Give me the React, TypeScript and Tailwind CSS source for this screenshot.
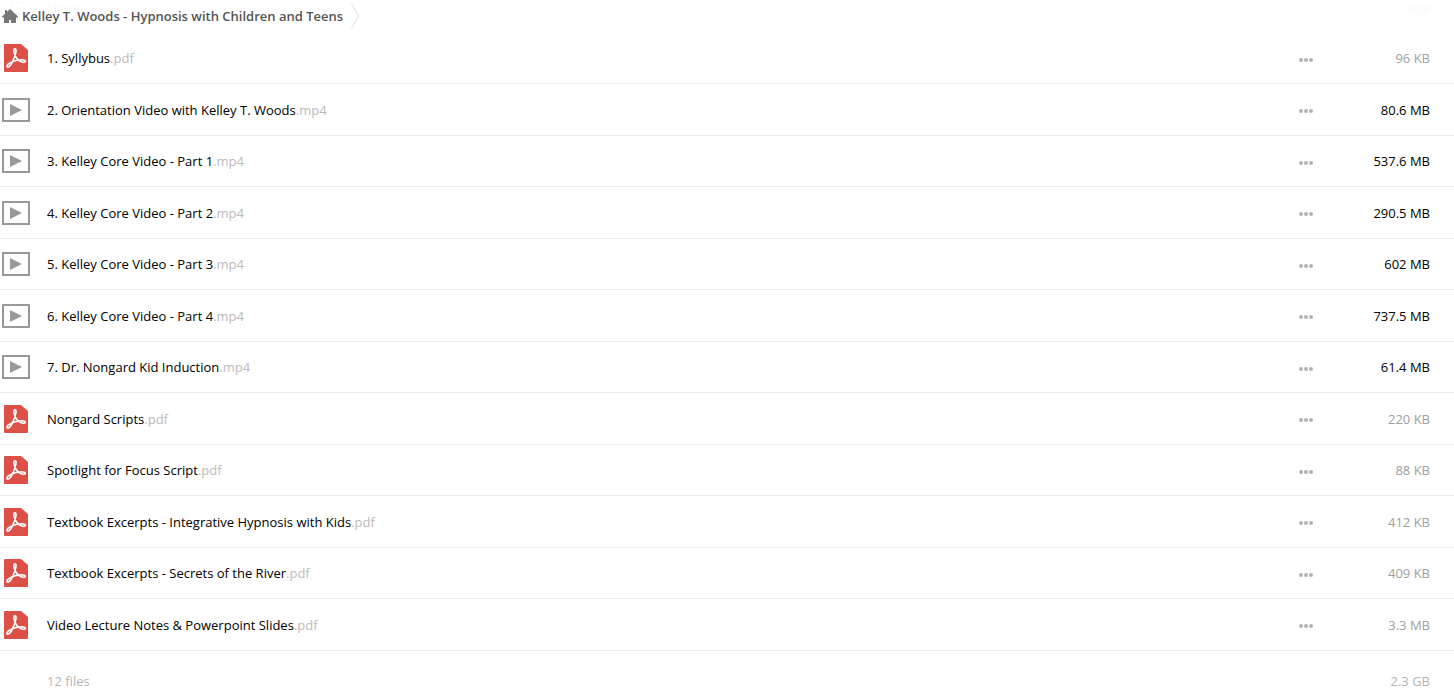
import React from 'react';

type FileKind = 'pdf' | 'mp4';

interface FileItem {
  name: string;
  kind: FileKind;
  size: string;
  large?: boolean;
}

const files: FileItem[] = [
  { name: '1. Syllybus', kind: 'pdf', size: '96 KB' },
  { name: '2. Orientation Video with Kelley T. Woods', kind: 'mp4', size: '80.6 MB', large: true },
  { name: '3. Kelley Core Video - Part 1', kind: 'mp4', size: '537.6 MB', large: true },
  { name: '4. Kelley Core Video - Part 2', kind: 'mp4', size: '290.5 MB', large: true },
  { name: '5. Kelley Core Video - Part 3', kind: 'mp4', size: '602 MB', large: true },
  { name: '6. Kelley Core Video - Part 4', kind: 'mp4', size: '737.5 MB', large: true },
  { name: '7. Dr. Nongard Kid Induction', kind: 'mp4', size: '61.4 MB', large: true },
  { name: 'Nongard Scripts', kind: 'pdf', size: '220 KB' },
  { name: 'Spotlight for Focus Script', kind: 'pdf', size: '88 KB' },
  { name: 'Textbook Excerpts - Integrative Hypnosis with Kids', kind: 'pdf', size: '412 KB' },
  { name: 'Textbook Excerpts - Secrets of the River', kind: 'pdf', size: '409 KB' },
  { name: 'Video Lecture Notes & Powerpoint Slides', kind: 'pdf', size: '3.3 MB' },
];

const PdfIcon = () => (
  <svg viewBox="0 0 24 28" className="w-6 h-7" aria-hidden="true">
    <path d="M1 0H17L24 6V27a1 1 0 0 1-1 1H1a1 1 0 0 1-1-1V1a1 1 0 0 1 1-1Z" fill="#dc5047" />
    <path
      d="M11 4.700c-1.600 0-1.300 2.400-.5 5 1.100 3.600 3.300 6.200 5.700 7.600 2.200 1.300 4.900 1.400 5.100.1.200-1.400-3.300-1.800-7-1.200-3.700.5-7.900 2-10.100 4-1.700 1.500-1.600 3.200-.3 3 1.900-.3 4.400-4.600 6-8.600 1.300-3.300 2.300-7.400 2.100-9-.1-.6-.5-.9-1-.9Z"
      fill="none"
      stroke="#fff"
      strokeWidth="1.600"
      strokeLinejoin="round"
    />
  </svg>
);

const VideoIcon = () => (
  <svg viewBox="0 0 28 24" className="w-7 h-6" aria-hidden="true">
    <rect x="1" y="1" width="26" height="22" fill="#fff" stroke="#999" strokeWidth="2" />
    <path d="M8 6L20 12L8 18Z" fill="#999" />
  </svg>
);

const HomeIcon = () => (
  <svg viewBox="0 0 16 14" className="w-4 h-3.5" aria-hidden="true">
    <path d="M8 0L16 7.600V8.500H14V14H9V11H7V14H2V8.500H0V7.600L3 4.700V1H5V2.800Z" fill="#777" />
  </svg>
);

const Breadcrumb = () => (
  <nav aria-label="Breadcrumb" className="absolute top-0 left-0 h-8 flex items-center pl-0.5">
    <a href="#" className="flex items-center gap-1 text-[13px] leading-5 font-semibold text-[#555]">
      <HomeIcon />
      Kelley T. Woods - Hypnosis with Children and Teens
    </a>
    <svg viewBox="0 0 10 24" className="w-2.5 h-6 ml-2" aria-hidden="true">
      <path d="M0.500 0L8 12L0.500 24" fill="none" stroke="#ddd" />
    </svg>
  </nav>
);

const FileRow = ({ file }: { file: FileItem }) => (
  <tr className="odd:h-[51px] even:h-[52px] [&>td]:border-b [&>td]:border-[#ebebeb]">
    <td>
      <div className="w-8 flex justify-center">
        {file.kind === 'pdf' ? <PdfIcon /> : <VideoIcon />}
      </div>
    </td>
    <td>
      <a href="#" className="text-black">
        {file.name}
        <span className="text-[#bbb]">.{file.kind}</span>
      </a>
    </td>
    <td>
      <button type="button" aria-label={`Actions for ${file.name}`} className="w-full h-8 pt-[3px] flex items-center justify-center">
        <svg viewBox="0 0 14 4" className="w-3.5 h-1" fill="#b3b3b3" aria-hidden="true">
          <circle cx="2" cy="2" r="2" />
          <circle cx="7" cy="2" r="2" />
          <circle cx="12" cy="2" r="2" />
        </svg>
      </button>
    </td>
    <td className={`text-right pr-6 ${file.large ? 'text-black' : 'text-[#a0a0a0]'}`}>{file.size}</td>
  </tr>
);

export default function App() {
  return (
    <main className="relative bg-white font-['Open_Sans',sans-serif] text-[13px] leading-5">
      <table className="w-full table-fixed border-separate border-spacing-0">
        <colgroup>
          <col className="w-[47px]" />
          <col />
          <col className="w-10" />
          <col className="w-32" />
        </colgroup>
        {/* Column titles stay faded while the breadcrumb covers them */}
        <thead>
          <tr className="h-[33px] text-[#fafafa] [&>th]:font-normal [&>th]:align-top [&>th]:border-b [&>th]:border-[#fcfcfc]">
            <th className="pt-0.5">
              <input
                type="checkbox"
                aria-label="Select all"
                className="appearance-none block w-3 h-3 ml-3 border border-[#fafafa]"
              />
            </th>
            <th className="text-left" aria-sort="ascending">
              <button type="button" className="flex items-center gap-2 -mt-0.5">
                Name
                <svg viewBox="0 0 8 4" className="w-2 h-1" fill="#fafafa" aria-hidden="true">
                  <path d="M4 0L8 4H0Z" />
                </svg>
              </button>
            </th>
            <th />
            <th className="text-right pr-6">
              <button type="button" className="block ml-auto -mt-0.5">Size</button>
            </th>
          </tr>
        </thead>
        <tbody>
          {files.map((file) => (
            <FileRow key={file.name} file={file} />
          ))}
        </tbody>
        <tfoot>
          <tr className="text-[#b3b3b3] [&>td]:pt-5">
            <td />
            <td>{files.length} files</td>
            <td />
            <td className="text-right pr-6">2.3 GB</td>
          </tr>
        </tfoot>
      </table>
      <Breadcrumb />
    </main>
  );
}
